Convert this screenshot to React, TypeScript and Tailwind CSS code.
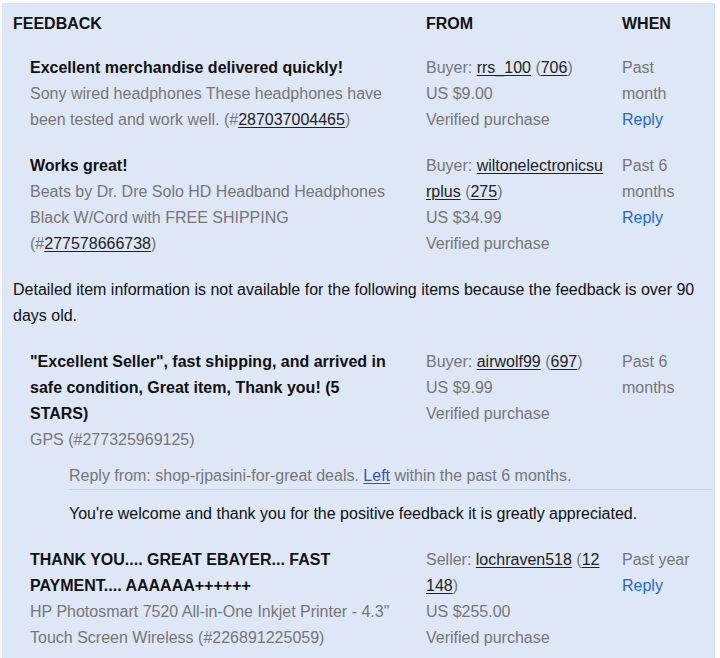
import React from 'react';

const gray = 'text-[#767676]';

const UserLink: React.FC<{ children: React.ReactNode }> = ({ children }) => (
  <a className="text-[#222] underline underline-offset-2">{children}</a>
);

interface Row {
  title: string;
  item: React.ReactNode;
  from: React.ReactNode;
  price: string;
  when: string;
  reply?: boolean;
}

const rowsA: Row[] = [
  {
    title: 'Excellent merchandise delivered quickly!',
    item: (
      <>
        Sony wired headphones These headphones have been tested and work well. (#<UserLink>287037004465</UserLink>)
      </>
    ),
    from: (
      <>
        Buyer: <UserLink>rrs_100</UserLink> (<UserLink>706</UserLink>)
      </>
    ),
    price: 'US $9.00',
    when: 'Past month',
    reply: true,
  },
  {
    title: 'Works great!',
    item: (
      <>
        Beats by Dr. Dre Solo HD Headband Headphones Black W/Cord with FREE SHIPPING (#<UserLink>277578666738</UserLink>)
      </>
    ),
    from: (
      <>
        Buyer: <UserLink>wiltonelectronicsurplus</UserLink> (<UserLink>275</UserLink>)
      </>
    ),
    price: 'US $34.99',
    when: 'Past 6 months',
    reply: true,
  },
];

const FeedbackRow: React.FC<{ row: Row }> = ({ row }) => (
  <>
    <div className="pl-[28px] pr-[28px] py-[10px]">
      <div className="font-bold text-[#111]">{row.title}</div>
      <div className={gray}>{row.item}</div>
    </div>
    <div className={`pr-[16px] py-[10px] break-all ${gray}`}>
      <div>{row.from}</div>
      <div>{row.price}</div>
      <div>Verified purchase</div>
    </div>
    <div className={`pr-[16px] py-[10px] ${gray}`}>
      <div>{row.when}</div>
      {row.reply && <a className="text-[#1d6ad8]">Reply</a>}
    </div>
  </>
);

export default function App() {
  return (
    <div className="bg-white min-h-screen pt-[3px] pl-[2px]" style={{ fontFamily: '"Liberation Sans", Arial, sans-serif' }}>
      <div className="w-[713px] bg-[#dee7f6] border-r border-[#cfd8e8] text-[16px] leading-[26px] text-[#111]">
        <div className="grid grid-cols-[424px_196px_1fr]">
          <div className="pl-[11px] pt-[8px] pb-[8px] font-bold">FEEDBACK</div>
          <div className="pt-[8px] pb-[8px] font-bold">FROM</div>
          <div className="pt-[8px] pb-[8px] font-bold">WHEN</div>

          {rowsA.map((r) => (
            <FeedbackRow key={r.title} row={r} />
          ))}

          <div className="col-span-3 pl-[11px] pr-[14px] py-[10px]">
            Detailed item information is not available for the following items because the feedback is over 90 days old.
          </div>

          <FeedbackRow
            row={{
              title: '"Excellent Seller", fast shipping, and arrived in safe condition, Great item, Thank you! (5 STARS)',
              item: 'GPS (#277325969125)',
              from: (
                <>
                  Buyer: <UserLink>airwolf99</UserLink> (<UserLink>697</UserLink>)
                </>
              ),
              price: 'US $9.99',
              when: 'Past 6 months',
            }}
          />

          <div className="col-span-3 pl-[67px] pr-[2px] pb-[10px]">
            <div className={`border-b border-[#cbd3df] ${gray}`}>
              Reply from: shop-rjpasini-for-great deals.{' '}
              <a className="text-[#3553b5] underline underline-offset-2">Left</a> within the past 6 months.
            </div>
            <div className="pt-[11px]">
              You're welcome and thank you for the positive feedback it is greatly appreciated.
            </div>
          </div>

          <FeedbackRow
            row={{
              title: 'THANK YOU.... GREAT EBAYER... FAST PAYMENT.... AAAAAA++++++',
              item: 'HP Photosmart 7520 All-in-One Inkjet Printer - 4.3" Touch Screen Wireless (#226891225059)',
              from: (
                <>
                  Seller: <UserLink>lochraven518</UserLink> (<UserLink>12148</UserLink>)
                </>
              ),
              price: 'US $255.00',
              when: 'Past year',
              reply: true,
            }}
          />
        </div>
      </div>
    </div>
  );
}
